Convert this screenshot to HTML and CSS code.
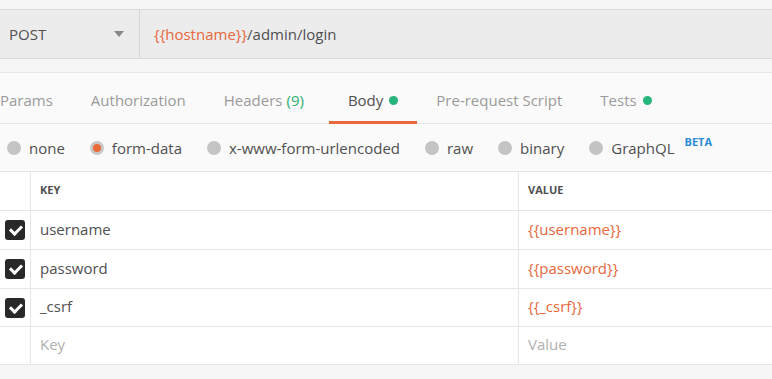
FILE: index.html
```html
<!DOCTYPE html>
<html lang="en">
<head>
  <meta charset="UTF-8">
  <title>POST login</title>
  <link rel="stylesheet" href="styles.css">
</head>
<body>

<div class="request">
  <div class="method">
    <span>POST</span>
    <span class="caret"></span>
  </div>
  <div class="url"><span class="var">{{hostname}}</span>/admin/login</div>
</div>

<div class="tabs">
  <div class="tab">Params</div>
  <div class="tab">Authorization</div>
  <div class="tab">Headers <span class="count">(9)</span></div>
  <div class="tab active">Body <span class="dot"></span></div>
  <div class="tab">Pre-request Script</div>
  <div class="tab">Tests <span class="dot"></span></div>
</div>

<div class="modes">
  <label class="mode"><span class="radio"></span>none</label>
  <label class="mode"><span class="radio on"></span>form-data</label>
  <label class="mode"><span class="radio"></span>x-www-form-urlencoded</label>
  <label class="mode"><span class="radio"></span>raw</label>
  <label class="mode"><span class="radio"></span>binary</label>
  <label class="mode"><span class="radio"></span>GraphQL<sup class="beta">BETA</sup></label>
</div>

<div class="table">
  <div class="row head">
    <div class="cell check"></div>
    <div class="cell">KEY</div>
    <div class="cell">VALUE</div>
  </div>
  <div class="row">
    <div class="cell check"><span class="box"></span></div>
    <div class="cell">username</div>
    <div class="cell var">{{username}}</div>
  </div>
  <div class="row">
    <div class="cell check"><span class="box"></span></div>
    <div class="cell">password</div>
    <div class="cell var">{{password}}</div>
  </div>
  <div class="row short">
    <div class="cell check"><span class="box"></span></div>
    <div class="cell">_csrf</div>
    <div class="cell var">{{_csrf}}</div>
  </div>
  <div class="row short">
    <div class="cell check"></div>
    <div class="cell placeholder">Key</div>
    <div class="cell placeholder">Value</div>
  </div>
</div>

</body>
</html>
```

FILE: styles.css
```css
body {
  margin: 0;
  background-color: #f6f6f6;
  font-family: "Open Sans", sans-serif;
  font-size: 15px;
  color: #505050;
}

.request {
  display: flex;
  height: 48px;
  margin-top: 9px;
  border-top: 1px solid #dadada;
  border-bottom: 1px solid #dadada;
  background-color: #ececec;
}

.method {
  display: flex;
  align-items: center;
  justify-content: space-between;
  width: 130px;
  padding-left: 9px;
  border-right: 1px solid #d6d6d6;
}

.caret {
  width: 0;
  height: 0;
  margin-right: 15px;
  border-left: 5px solid transparent;
  border-right: 5px solid transparent;
  border-top: 6px solid #888;
}

.url {
  display: flex;
  align-items: center;
  padding-left: 14px;
}

.var {
  color: #e8673c;
}

.tabs {
  display: flex;
  height: 50px;
  margin-top: 13px;
  border-top: 1px solid #e8e8e8;
  border-bottom: 1px solid #e8e8e8;
  background-color: #fafafa;
}

.tab {
  display: flex;
  align-items: center;
  padding: 6px 19px 0;
  color: #9a9a9a;
  border-bottom: 3px solid transparent;
  margin-bottom: -1px;
}

.tab:first-child {
  padding-left: 0;
}

.tab .count {
  margin-left: 4px;
  color: #2bae72;
}

.tab.active {
  margin-left: 6px;
  color: #505050;
  border-bottom-color: #e8683b;
}

.dot {
  display: inline-block;
  width: 9px;
  height: 9px;
  margin-left: 6px;
  border-radius: 50%;
  background-color: #26b47a;
}

.modes {
  display: flex;
  align-items: center;
  gap: 25px;
  height: 47px;
  padding-left: 7px;
  background-color: #fafafa;
}

.mode {
  display: flex;
  align-items: center;
  gap: 8px;
}

.radio {
  width: 14px;
  height: 14px;
  border-radius: 50%;
  background-color: #c4c4c4;
  box-sizing: border-box;
}

.radio.on {
  border: 3px solid #c8c8c8;
  background-color: #ec6b3a;
}

.beta {
  align-self: flex-start;
  margin-left: 2px;
  margin-top: -4px;
  font-size: 11px;
  font-weight: bold;
  color: #2a8ad8;
}

.table {
  background-color: #fff;
  border-top: 1px solid #e6e6e6;
  border-bottom: 1px solid #e6e6e6;
}

.row {
  display: grid;
  grid-template-columns: 31px 488px 1fr;
  height: 38px;
  border-top: 1px solid #e6e6e6;
}

.row.short {
  height: 37px;
}

.row:first-child {
  border-top: none;
}

.row.head {
  font-size: 11px;
  font-weight: bold;
}

.cell {
  display: flex;
  align-items: center;
  padding-left: 9px;
  padding-bottom: 3px;
  border-right: 1px solid #e6e6e6;
}

.cell:last-child {
  border-right: none;
}

.cell.check {
  padding-left: 5px;
  padding-bottom: 0;
}

.placeholder {
  color: #b0b0b0;
}

.box {
  position: relative;
  width: 20px;
  height: 20px;
  border-radius: 3px;
  background-color: #282828;
}

.box::after {
  content: "";
  position: absolute;
  left: 7px;
  top: 3px;
  width: 5px;
  height: 9px;
  border-right: 3px solid #fff;
  border-bottom: 3px solid #fff;
  transform: rotate(45deg);
}
```
